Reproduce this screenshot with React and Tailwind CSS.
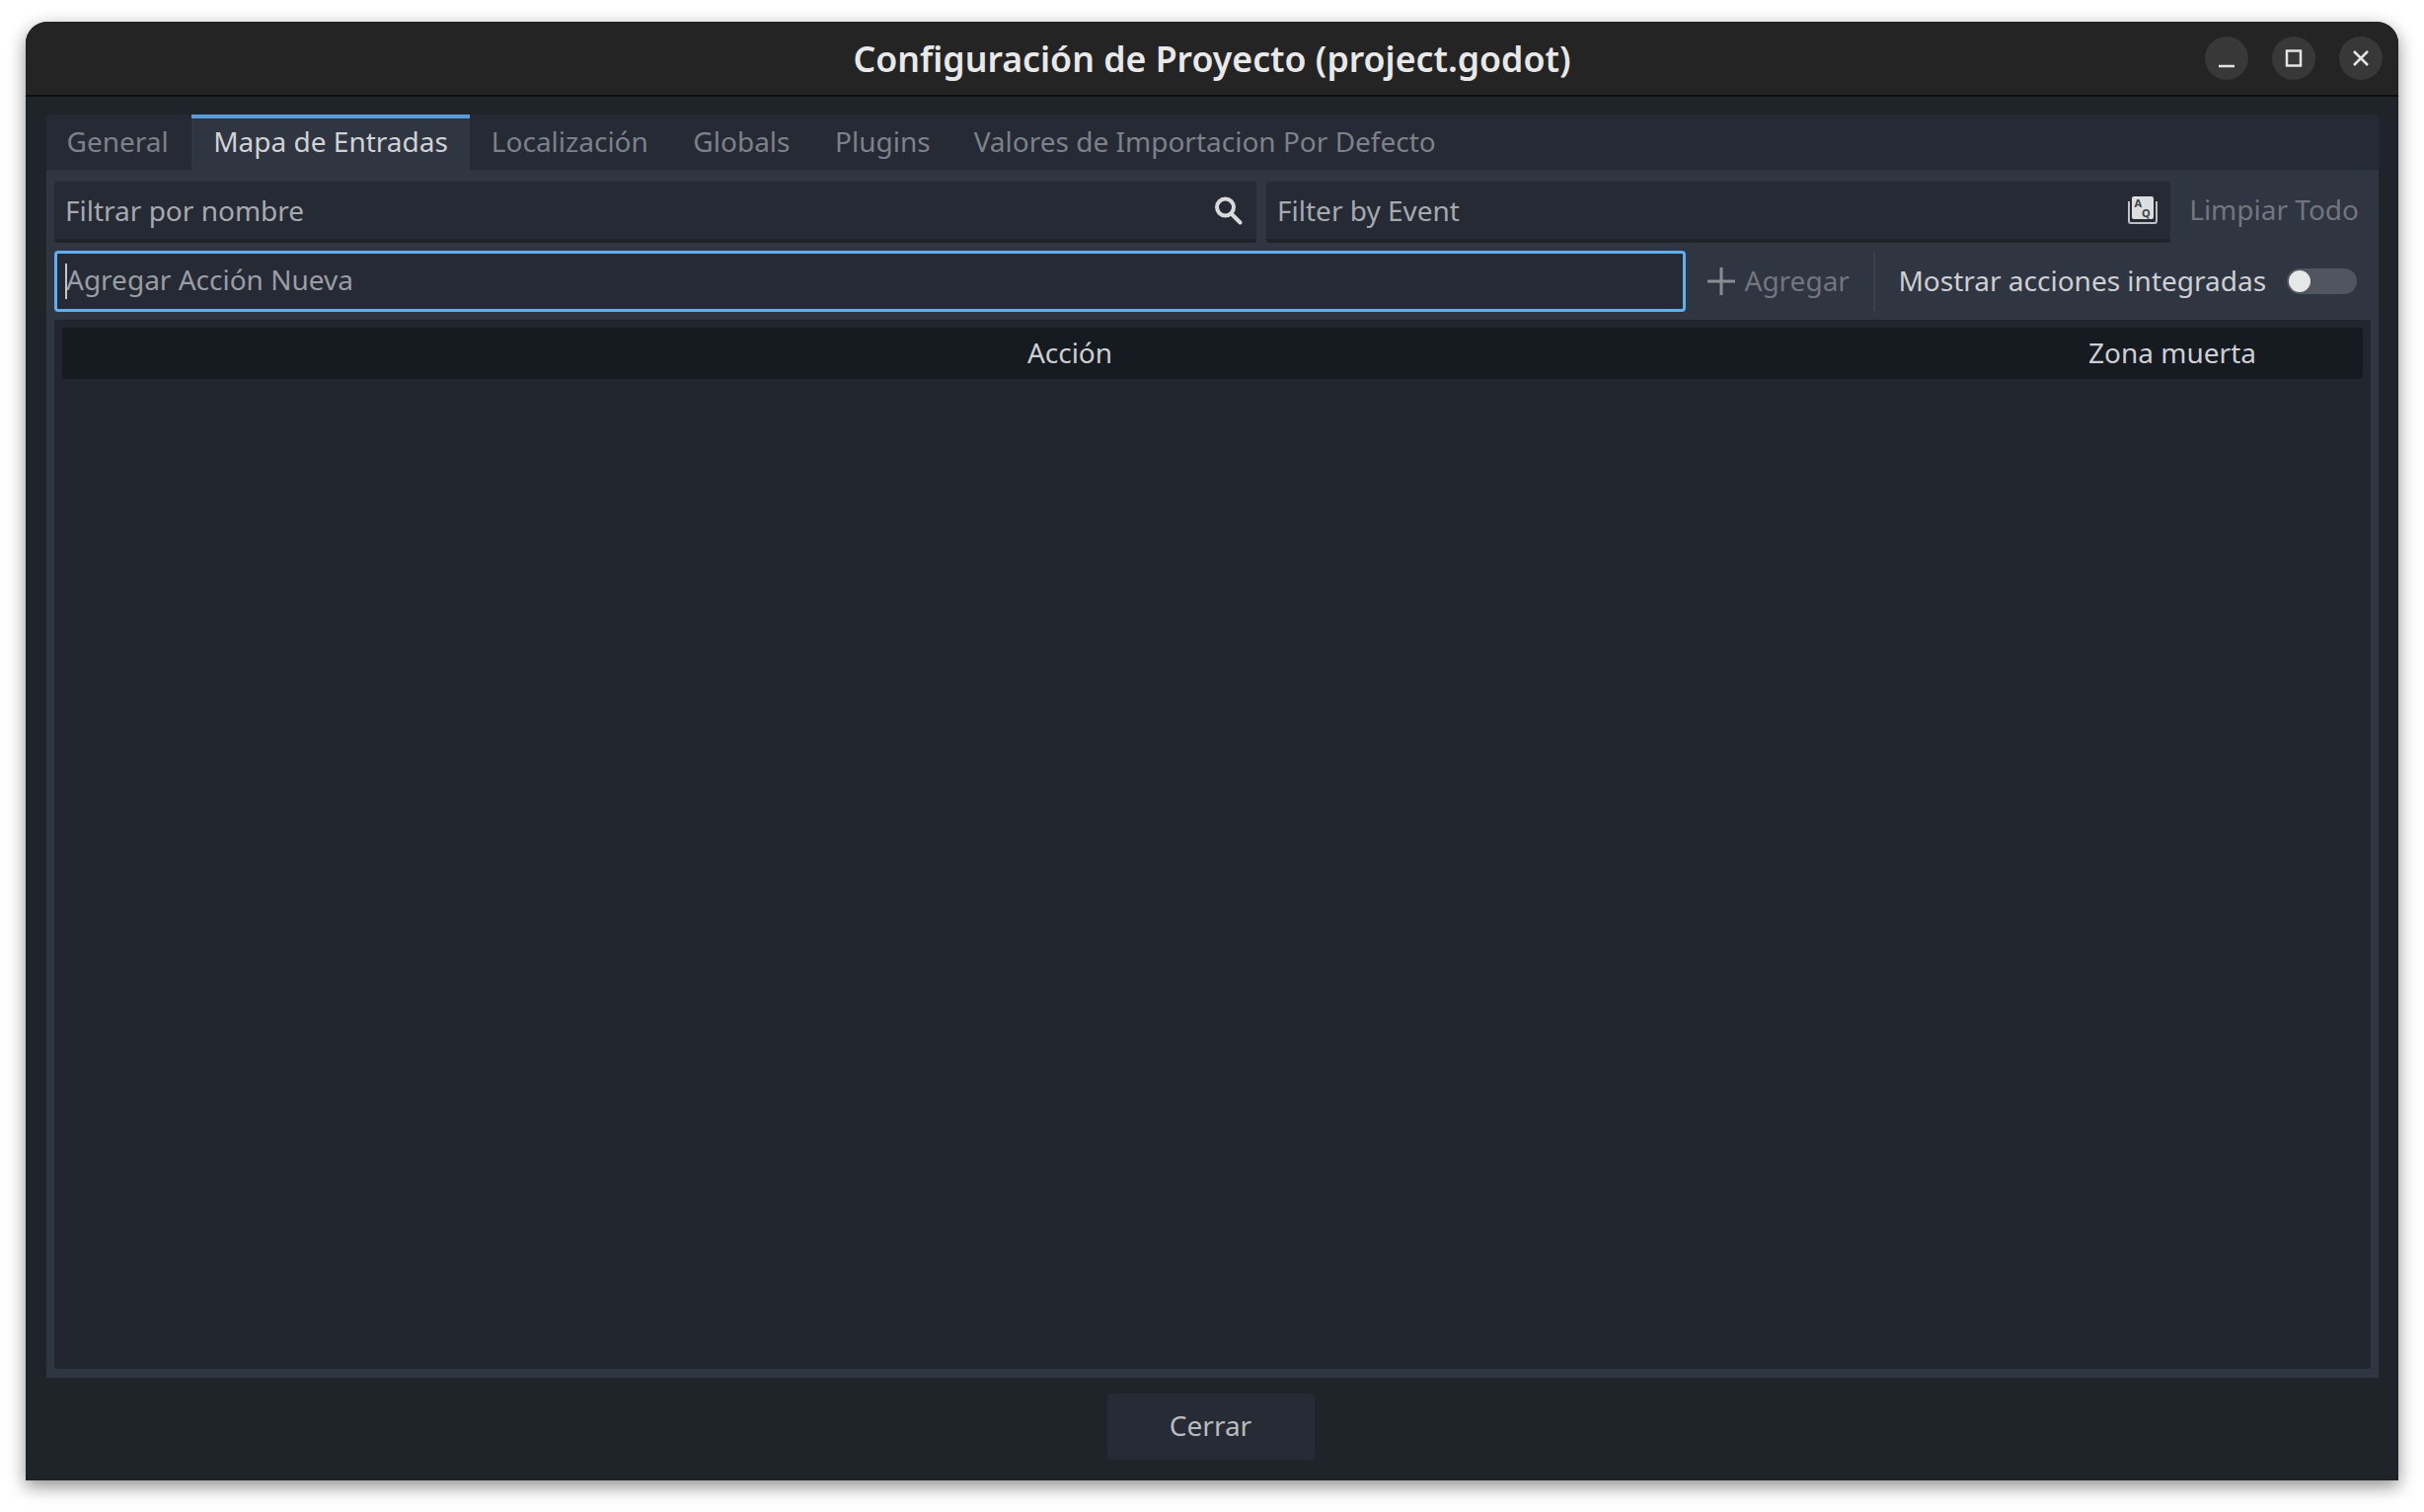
const sans = "font-['Noto_Sans','Open_Sans',sans-serif]";

function Tab({ label, active, spacing = "pl-[22px] pr-[22px]" }) {
  return (
    <div
      className={
        active
          ? `flex h-full items-center border-t-4 border-[#5a9bd8] bg-[#2f3541] pb-[7px] text-[#d0d2d5] ${spacing}`
          : `flex h-full items-center pb-[3px] text-[#7d8188] ${spacing}`
      }
    >
      {label}
    </div>
  );
}

function CircleButton({ children }) {
  return (
    <div className="flex h-[44px] w-[44px] items-center justify-center rounded-full bg-[#383838]">
      {children}
    </div>
  );
}

export default function App() {
  return (
    <div className={`h-[1532px] w-[2456px] overflow-hidden bg-white pl-[26px] pt-[22px] ${sans}`}>
      <div className="flex h-[1478px] w-[2404px] flex-col overflow-hidden rounded-t-[22px] bg-[#1f232a] shadow-[0_6px_18px_rgba(0,0,0,0.45)]">
        {/* title bar */}
        <div className="relative flex h-[76px] shrink-0 items-center justify-end gap-[24px] border-b-2 border-[#0e0e0e] bg-[#242424] pr-[16px]">
          <div className="absolute inset-x-0 top-[14px] text-center text-[35.7px] font-semibold leading-[46px] text-[#e8e8e8]">
            Configuración de Proyecto (project.godot)
          </div>
          <CircleButton>
            <svg width="20" height="20" viewBox="0 0 20 20" className="translate-y-[4px]">
              <path d="M2 14h16" stroke="#e4e4e4" strokeWidth="2.5" />
            </svg>
          </CircleButton>
          <CircleButton>
            <svg width="20" height="20" viewBox="0 0 20 20">
              <rect x="3" y="2.5" width="14" height="15" fill="none" stroke="#e4e4e4" strokeWidth="2.5" />
            </svg>
          </CircleButton>
          <CircleButton>
            <svg width="20" height="20" viewBox="0 0 20 20">
              <path d="M3 3l14 14M17 3L3 17" stroke="#e4e4e4" strokeWidth="2.5" />
            </svg>
          </CircleButton>
        </div>

        {/* tab container */}
        <div className="mx-[21px] mt-[18px] flex h-[1280px] w-[2363px] shrink-0 flex-col text-[28px] leading-[38px]">
          <div className="flex h-[56px] shrink-0 rounded-t-[4px] bg-[#252a34]">
            <Tab label="General" spacing="pl-[20.5px] pr-[23.5px]" />
            <Tab label="Mapa de Entradas" active />
            <Tab label="Localización" spacing="pl-[22px] pr-[23.5px]" />
            <Tab label="Globals" spacing="pl-[22px] pr-[23.5px]" />
            <Tab label="Plugins" />
            <Tab label="Valores de Importacion Por Defecto" />
          </div>

          <div className="flex min-h-0 flex-1 flex-col bg-[#2f3541] px-[8px] pb-[9px] pt-[12px]">
            {/* filter row */}
            <div className="flex h-[62px] shrink-0 items-stretch">
              <div className="flex w-[1218px] items-center justify-between rounded-[3px] border-b-4 border-[#1f232a] bg-[#252a34] pl-[11px] pr-[13px] text-[#a6a9ae]">
                <span>Filtrar por nombre</span>
                <svg width="30" height="30" viewBox="0 0 30 30">
                  <circle cx="11.5" cy="12" r="8.5" fill="none" stroke="#d8d9db" strokeWidth="4" />
                  <path d="M17.5 18.5l9 9" stroke="#d8d9db" strokeWidth="4" strokeLinecap="round" />
                </svg>
              </div>
              <div className="ml-[10px] flex w-[916px] items-center justify-between rounded-[3px] border-b-4 border-[#1f232a] bg-[#252a34] pl-[11px] pr-[13px] text-[#a6a9ae]">
                <span>Filter by Event</span>
                <svg width="30" height="28" viewBox="0 0 30 28">
                  <path d="M1 5v20a2 2 0 0 0 2 2h24a2 2 0 0 0 2-2V5" fill="none" stroke="#bfc1c4" strokeWidth="2" />
                  <rect x="4" y="0" width="22" height="23" rx="2" fill="#dcdddf" />
                  <text x="6.5" y="11" fontSize="11" fontWeight="700" fill="#3a3f49">A</text>
                  <text x="14" y="21" fontSize="11" fontWeight="700" fill="#3a3f49">Q</text>
                </svg>
              </div>
              <div className="flex flex-1 items-center justify-end pb-[6px] pr-[12px] text-[#72767e]">Limpiar Todo</div>
            </div>

            {/* add row */}
            <div className="mt-[8px] flex h-[62px] shrink-0 items-center">
              <div className="relative flex h-full w-[1653px] items-center rounded-[4px] border-[3px] border-[#60aef0] bg-[#252a34] pb-[4px] pl-[9px] text-[#9a9da3]">
                <div className="absolute left-[8px] top-[10px] h-[36px] w-[2px] bg-[#c4c6c9]" />
                <span>Agregar Acción Nueva</span>
              </div>
              <div className="ml-[21.5px] flex items-center text-[#72767e]">
                <svg width="28" height="28" viewBox="0 0 28 28">
                  <path d="M14 0v28M0 14h28" stroke="#8a8d93" strokeWidth="3" />
                </svg>
                <span className="-mt-[3px] ml-[10px]">Agregar</span>
              </div>
              <div className="ml-[24px] h-[60px] w-[2px] bg-[#3a404c]" />
              <span className="-mt-[3px] ml-[23.5px] text-[#cdcfd2]">Mostrar acciones integradas</span>
              <div className="ml-[21px] flex h-[26px] w-[71px] items-center rounded-full bg-[#50555f] pl-[2px]">
                <div className="h-[22px] w-[22px] rounded-full bg-[#e6e7e8]" />
              </div>
            </div>

            {/* tree */}
            <div className="mt-[8px] flex min-h-0 flex-1 flex-col rounded-[3px] bg-[#22262e] p-[8px] pb-0">
              <div className="grid h-[52px] shrink-0 grid-cols-[2045px_187px_1fr] items-center rounded-[3px] bg-[#161a21] pb-[3px] text-center text-[#cdcfd2]">
                <span className="pr-[3px]">Acción</span>
                <span className="whitespace-nowrap pr-[1px]">Zona muerta</span>
                <span />
              </div>
            </div>
          </div>
        </div>

        {/* footer */}
        <div className="flex flex-1 items-start justify-center pr-[3px] pt-[16px]">
          <div className="flex h-[67px] w-[210px] items-center justify-center rounded-[4px] bg-[#262b35] pb-[3px] text-[28px] text-[#b9bbbe]">
            Cerrar
          </div>
        </div>
      </div>
    </div>
  );
}
